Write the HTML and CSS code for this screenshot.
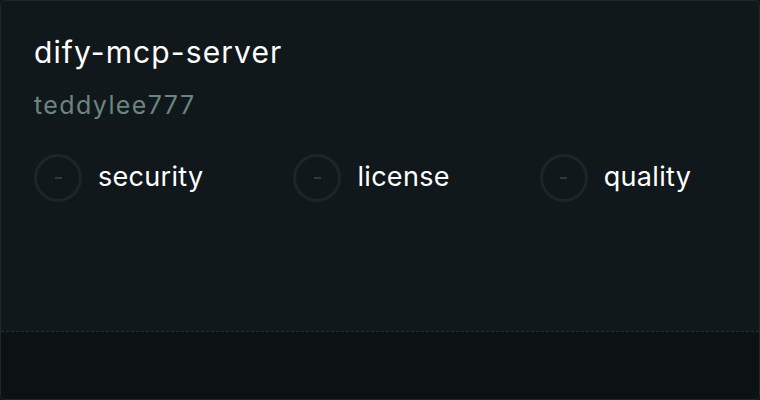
FILE: index.html
```html
<!DOCTYPE html>
<html>
<head>
<meta charset="utf-8">
<link rel="stylesheet" href="styles.css">
</head>
<body>
<div class="card">
  <div class="main">
    <h1 class="title">dify-mcp-server</h1>
    <div class="owner">teddylee777</div>
    <div class="scores">
      <div class="score"><span class="ring"><span class="dash"></span></span><span class="label">security</span></div>
      <div class="score"><span class="ring"><span class="dash"></span></span><span class="label">license</span></div>
      <div class="score"><span class="ring"><span class="dash"></span></span><span class="label">quality</span></div>
    </div>
  </div>
  <div class="footer"></div>
</div>
</body>
</html>
```
FILE: styles.css
```css
html, body {
  margin: 0;
  padding: 0;
  background: #0f1719;
}
body {
  width: 760px;
  height: 400px;
  font-family: Inter, "Noto Sans", sans-serif;
}
.card {
  box-sizing: border-box;
  width: 760px;
  height: 400px;
  border: 1px solid #1f2729;
  border-radius: 6px;
  background: #10181b;
  display: flex;
  flex-direction: column;
  overflow: hidden;
}
.main {
  flex: 1;
  padding: 31px 33px 0;
}
.title {
  margin: 0;
  font-size: 30px;
  font-weight: 400;
  letter-spacing: 1.1px;
  color: #ffffff;
  line-height: 40px;
}
.owner {
  margin-top: 18px;
  font-size: 25px;
  letter-spacing: 1.4px;
  color: #6c8580;
  line-height: 30px;
}
.scores {
  display: flex;
  gap: 90px;
  margin-top: 34px;
}
.score {
  display: flex;
  align-items: center;
  gap: 16px;
}
.ring {
  box-sizing: border-box;
  width: 48px;
  height: 48px;
  border: 3px solid #1d2527;
  border-radius: 50%;
  display: flex;
  align-items: center;
  justify-content: center;
}
.dash {
  width: 7px;
  height: 2px;
  background: #31393b;
}
.label {
  font-size: 27px;
  line-height: 32px;
  letter-spacing: 0.3px;
  color: #ffffff;
  margin-top: -2px;
}
.footer {
  height: 67px;
  border-top: 1px dashed #262e31;
  background: #0c1114;
}
```
